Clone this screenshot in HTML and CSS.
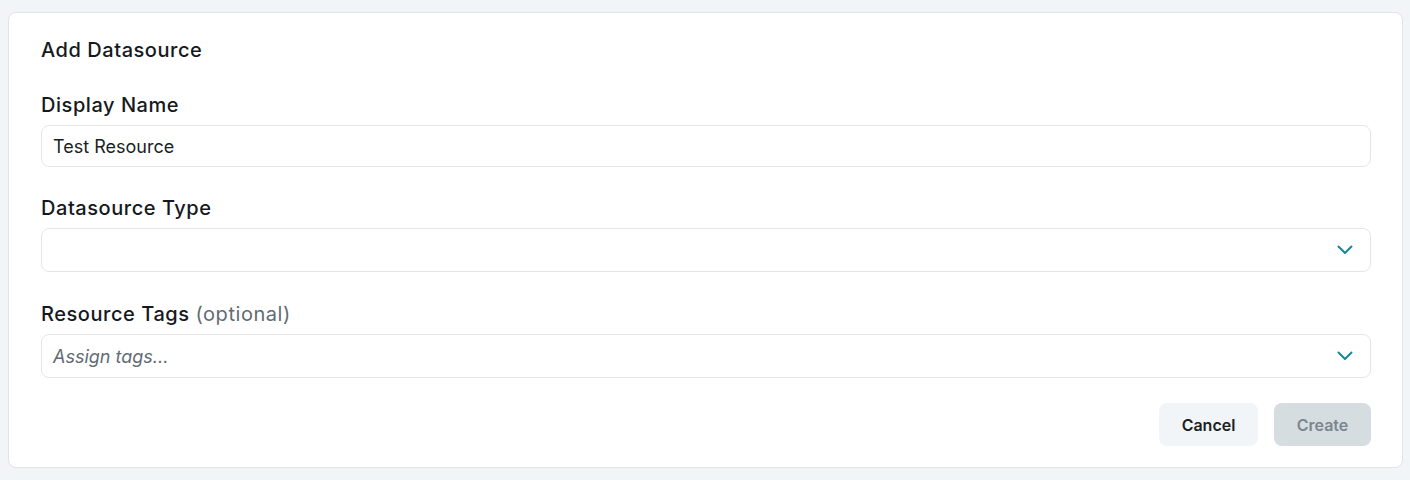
FILE: index.html
```html
<!DOCTYPE html>
<html>
<head>
<meta charset="utf-8">
<link rel="stylesheet" href="styles.css">
</head>
<body>
<div class="card">
  <h1 class="title">Add Datasource</h1>
  <div class="field field-first">
    <label class="label">Display Name</label>
    <div class="input">Test Resource</div>
  </div>
  <div class="field field-second">
    <label class="label">Datasource Type</label>
    <div class="select">
      <span class="select-value"></span>
      <svg class="chevron" width="18" height="18" viewBox="0 0 18 18"><path d="M2.5 5.5l6.5 6.5 6.5-6.5" fill="none" stroke="#14879a" stroke-width="2" stroke-linecap="round" stroke-linejoin="round"/></svg>
    </div>
  </div>
  <div class="field field-third">
    <label class="label">Resource Tags <span class="optional">(optional)</span></label>
    <div class="select">
      <span class="placeholder">Assign tags...</span>
      <svg class="chevron" width="18" height="18" viewBox="0 0 18 18"><path d="M2.5 5.5l6.5 6.5 6.5-6.5" fill="none" stroke="#14879a" stroke-width="2" stroke-linecap="round" stroke-linejoin="round"/></svg>
    </div>
  </div>
  <div class="actions">
    <button class="btn btn-cancel">Cancel</button>
    <button class="btn btn-create" disabled>Create</button>
  </div>
</div>
</body>
</html>
```
FILE: styles.css
```css
* { box-sizing: border-box; }
html, body { margin: 0; }
body {
  background: #f1f5f7;
  padding: 12px 7px 12px 8px;
  font-family: Inter, "Noto Sans", sans-serif;
  color: #1b1f23;
}
.card {
  background: #fff;
  border: 1px solid #e1e5e8;
  border-radius: 8px;
  padding: 25px 31px 21px 32px;
}
.title {
  margin: 0;
  font-size: 20px;
  line-height: 24px;
  font-weight: 500;
  letter-spacing: 0.55px;
  color: #15191d;
}
.field { display: flex; flex-direction: column; }
.field-first { margin-top: 31px; }
.field-second { margin-top: 29px; }
.field-third { margin-top: 30px; }
.label {
  font-size: 20px;
  line-height: 24px;
  font-weight: 500;
  letter-spacing: 0.55px;
  color: #15191d;
  margin-bottom: 8px;
}
.optional { color: #5f6b74; font-weight: 400; }
.input {
  height: 42px;
  border: 1px solid #e3e7ea;
  border-radius: 8px;
  padding: 0 11px;
  display: flex;
  align-items: center;
  font-size: 18px;
  color: #1b1f23;
}
.select {
  height: 44px;
  border: 1px solid #e3e7ea;
  border-radius: 8px;
  padding: 0 16px 0 11px;
  display: flex;
  align-items: center;
  justify-content: space-between;
  font-size: 18px;
}
.placeholder { color: #5f6b74; font-style: italic; }
.chevron { display: block; }
.actions {
  margin-top: 25px;
  display: flex;
  justify-content: flex-end;
  gap: 16px;
}
.btn {
  font-family: Inter, "Noto Sans", sans-serif;
  font-size: 16px;
  font-weight: 600;
  height: 43px;
  border: none;
  border-radius: 8px;
  padding: 0;
}
.btn-cancel { background: #f1f5f7; color: #1b1f23; width: 99px; }
.btn-create { background: #d5dde0; color: #7b868e; width: 97px; }
```
